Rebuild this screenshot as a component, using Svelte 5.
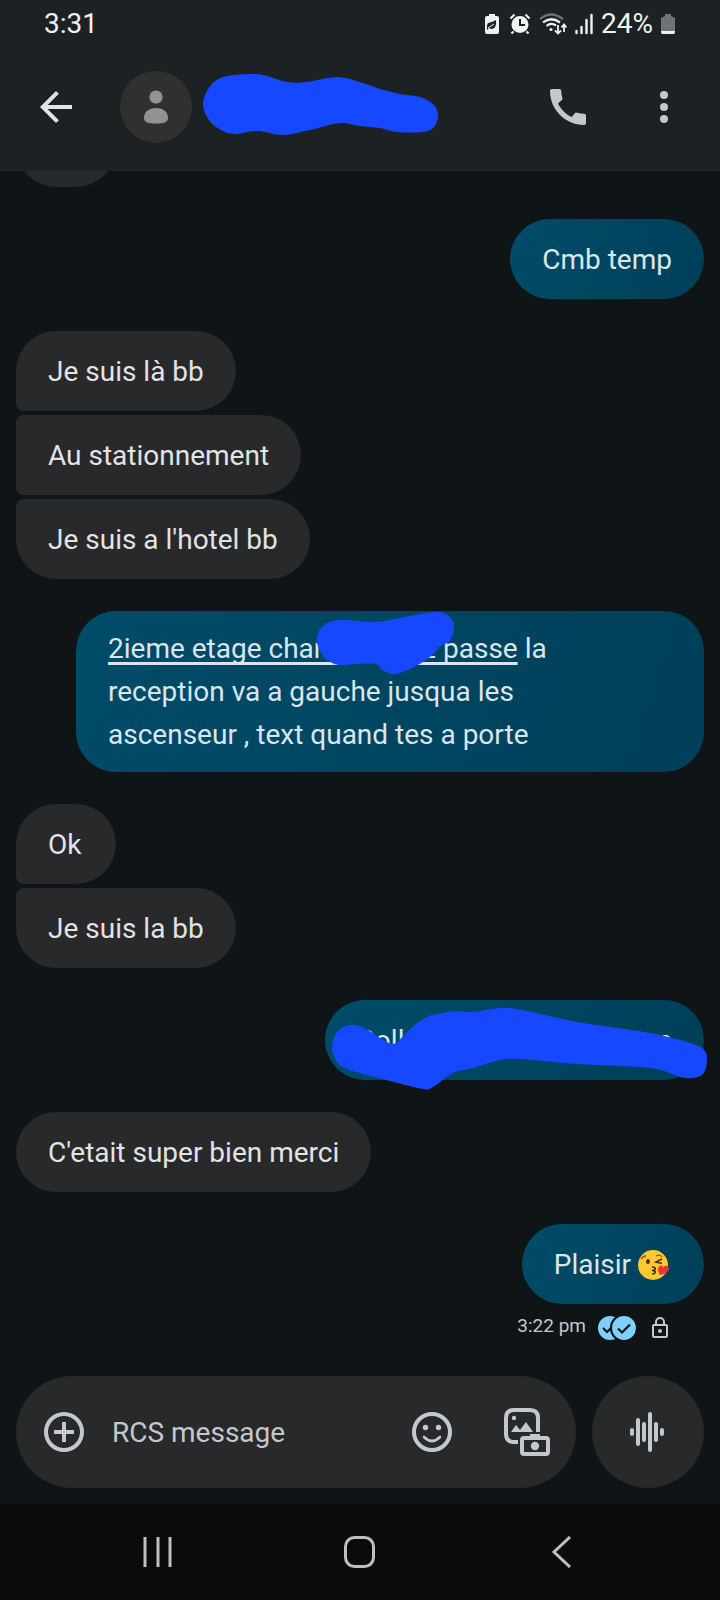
<script lang="ts">
    type Point = [number, number];
    type Part = { text?: string; link?: boolean; gap?: number };
    type Bubble = { parts: Part[]; scribble?: Point[]; emoji?: boolean; wide?: boolean };
    type Group = { from: "them" | "me"; bubbles: Bubble[] };

    const nameScribble: Point[] = [
        [0, 31], [3, 19], [11, 8], [24, 2], [50, 0], [64, 2], [84, 8], [104, 8], [134, 3],
        [157, 8], [177, 15], [197, 20], [217, 23], [231, 31], [235, 42], [231, 53], [220, 58],
        [194, 58], [177, 54], [157, 52], [137, 49], [107, 56], [80, 61], [54, 57],
        [30, 60], [13, 53], [4, 43],
    ];

    const groups: Group[] = [
        // scrolled almost completely under the header
        { from: "them", bubbles: [{ parts: [] }] },
        { from: "me", bubbles: [{ parts: [{ text: "Cmb temp" }] }] },
        {
            from: "them",
            bubbles: [
                { parts: [{ text: "Je suis là bb" }] },
                { parts: [{ text: "Au stationnement" }] },
                { parts: [{ text: "Je suis a l'hotel bb" }] },
            ],
        },
        {
            from: "me",
            bubbles: [
                {
                    wide: true,
                    parts: [
                        { text: "2ieme etage cham", link: true },
                        { gap: 75 },
                        { text: "\u00a02 passe", link: true },
                        { text: " la\n" },
                        { text: "reception va a gauche jusqua les\n" },
                        { text: "ascenseur , text quand tes a porte" },
                    ],
                    scribble: [
                        [241, 32], [243, 20], [253, 11], [270, 9], [300, 11], [333, 5],
                        [361, 1], [374, 6], [378, 17], [374, 30], [365, 35], [354, 46],
                        [338, 56], [319, 63], [306, 59], [300, 53], [280, 53], [262, 54], [248, 46],
                    ],
                },
            ],
        },
        {
            from: "them",
            bubbles: [{ parts: [{ text: "Ok" }] }, { parts: [{ text: "Je suis la bb" }] }],
        },
        {
            from: "me",
            bubbles: [
                {
                    parts: [{ text: "Coll" }, { gap: 243 }, { text: "m" }],
                    scribble: [
                        [7, 47], [10, 35], [18, 27], [30, 25], [43, 30], [62, 42], [71, 43],
                        [82, 32], [98, 19], [113, 14], [132, 11], [148, 12], [177, 8], [202, 11],
                        [258, 23], [325, 33], [368, 44], [380, 51], [382, 62], [378, 74], [368, 78],
                        [355, 77], [325, 68], [252, 64], [195, 59], [175, 60], [148, 68],
                        [128, 73], [108, 87], [98, 89], [65, 81], [22, 69], [11, 60],
                    ],
                },
            ],
        },
        { from: "them", bubbles: [{ parts: [{ text: "C'etait super bien merci" }] }] },
        { from: "me", bubbles: [{ parts: [{ text: "Plaisir " }], emoji: true }] },
    ];

    let draft = $state("");

    // closed Catmull-Rom curve through the points
    function smooth(points: Point[]) {
        const n = points.length;
        let d = `M${points[0][0]} ${points[0][1]}`;
        for (let i = 0; i < n; i++) {
            const a = points[(i + n - 1) % n];
            const b = points[i];
            const c = points[(i + 1) % n];
            const e = points[(i + 2) % n];
            d += `C${b[0] + (c[0] - a[0]) / 6} ${b[1] + (c[1] - a[1]) / 6}`;
            d += ` ${c[0] - (e[0] - b[0]) / 6} ${c[1] - (e[1] - b[1]) / 6} ${c[0]} ${c[1]}`;
        }
        return d + "Z";
    }
</script>

<div class="phone">
    <header>
        <div class="status">
            <span class="clock">3:31</span>
            <svg width="16" height="22" viewBox="0 0 16 22">
                <path d="M4 1h6v2h2q2 0 2 2v14q0 2-2 2H2q-2 0-2-2V5q0-2 2-2h2z" fill="#f0f1f2" />
                <path d="M2 15q-1-6 5-6l4-2q1 9-5 9l-2-1-2 2z" fill="#1c2124" />
                <path d="M3 15l6-4" stroke="#f0f1f2" />
            </svg>
            <svg width="22" height="22" viewBox="0 0 22 22" fill="none" stroke="#f0f1f2">
                <circle cx="11" cy="11.500" r="8.500" fill="#f0f1f2" stroke="none" />
                <path d="M1.500 5.500L5.500 1.500M20.500 5.500L16.500 1.500M4.500 18.500L2.500 20.500M17.500 18.500L19.500 20.500" stroke-width="2.200" />
                <path d="M11 6v6h5" stroke="#1c2124" stroke-width="2" />
            </svg>
            <svg width="28" height="22" viewBox="0 0 28 22" fill="none" stroke-width="2.200">
                <path d="M1 6Q12-3 24 6" stroke="#6d7174" />
                <path d="M4 9.500Q12 3 21 9.500M7.500 13Q12 9 17 12.500" stroke="#f0f1f2" />
                <circle cx="12" cy="16.500" r="1.600" fill="#f0f1f2" />
                <path d="M19 12v8M16 17.500l3 3 3-3M25 19v-7M22.500 14.500l2.500-3 2.500 3" stroke="#f0f1f2" stroke-width="1.800" />
            </svg>
            <svg width="18" height="22" viewBox="0 0 18 22" stroke="#f0f1f2" stroke-width="2.400" stroke-linecap="round">
                <path d="M1.500 18v2M6.500 14V20M11.500 7V20M16.500 2V20" />
            </svg>
            <span>24%</span>
            <svg width="14" height="22" viewBox="0 0 14 22">
                <path d="M4 1h6v2l4 2v14q0 2-2 2H2q-2 0-2-2V5l4-2z" fill="#707275" />
                <path d="M0 18h14v1q0 2-2 2H2q-2 0-2-2z" fill="#f0f1f2" />
            </svg>
        </div>
        <div class="appbar">
            <button class="icon light" aria-label="Back">
                <svg viewBox="0 0 24 24"><path d="M20 11H7.830l5.590-5.590L12 4l-8 8 8 8 1.410-1.410L7.830 13H20z" /></svg>
            </button>
            <div class="avatar">
                <svg width="24" height="34" viewBox="0 0 24 34">
                    <circle cx="12" cy="7" r="6.600" />
                    <path d="M0 28C0 21 6 18 12 18s12 3 12 10c0 4-3 5.500-12 5.500S0 32 0 28z" />
                </svg>
            </div>
            <svg class="name" width="236" height="62" viewBox="0 0 236 62"><path d={smooth(nameScribble)} /></svg>
            <button class="icon" aria-label="Call">
                <svg viewBox="0 0 24 24">
                    <path d="M20.010 15.380c-1.230 0-2.420-.2-3.530-.56-.35-.12-.74-.03-1.010.24l-1.570 1.970c-2.830-1.350-5.480-3.900-6.890-6.830l1.950-1.660c.27-.28.35-.67.24-1.020-.37-1.110-.56-2.300-.56-3.530 0-.54-.45-.99-.99-.99H4.190C3.650 3 3 3.240 3 3.990 3 13.280 10.730 21 20.010 21c.71 0 .99-.63.99-1.180v-3.450c0-.54-.45-.99-.99-.99z" />
                </svg>
            </button>
            <button class="icon" aria-label="More options">
                <svg viewBox="0 0 24 24">
                    <circle cx="12" cy="6" r="2" />
                    <circle cx="12" cy="12" r="2" />
                    <circle cx="12" cy="18" r="2" />
                </svg>
            </button>
        </div>
    </header>

    <main>
        {#each groups as group}
            <div class="group {group.from}">
                {#each group.bubbles as bubble}
                    <div class="bubble" class:wide={bubble.wide}>
                        <p>{#each bubble.parts as part}{#if part.gap}<span class="gap" style="width: {part.gap}px"></span>{:else if part.link}<a href="#place">{part.text}</a>{:else}{part.text}{/if}{/each}{#if bubble.emoji}<svg class="emoji" width="34" height="30" viewBox="0 0 34 30" role="img" aria-label="Kiss">
                                <circle cx="15" cy="15" r="15" fill="#fcc92f" />
                                <path d="M3 9q2-3 5-3M18 6q4-2 6 1" fill="none" stroke="#8a5a12" stroke-width="1.300" />
                                <ellipse cx="10" cy="11.500" rx="2" ry="2.500" fill="#50310f" />
                                <path d="M24 9l-6 3 6 1.500M14 17q4 0 3 2.500-1 1-3 1 4 0 3 2.500-1 1-3 1" fill="none" stroke="#50310f" stroke-width="1.700" />
                                <path d="M22 25c-2-3-3-7 0-9 2-1 3 0 3 2 1-3 5-3 6 0 0 4-5 6-9 7z" fill="#e5343d" />
                            </svg>{/if}</p>
                        {#if bubble.scribble}
                            <svg class="scribble"><path d={smooth(bubble.scribble)} /></svg>
                        {/if}
                    </div>
                {/each}
            </div>
        {/each}
        <div class="receipt">
            <time>3:22 pm</time>
            <svg width="38" height="24" viewBox="0 0 38 24" fill="none" stroke="#101518" stroke-width="2.200">
                <circle cx="12" cy="12" r="12" fill="#7fcfff" stroke="none" />
                <path d="M5 12l4 4 8-8" />
                <circle cx="26" cy="12" r="13" fill="#7fcfff" />
                <path d="M20 12.500l4 4 8-8" />
            </svg>
            <svg width="24" height="24" viewBox="0 0 24 24" fill="none" stroke="#c4c7c9" stroke-width="2">
                <rect x="5" y="9" width="14" height="12" rx="1" />
                <path d="M8 9V6a4 4 0 0 1 8 0v3" />
                <circle cx="12" cy="15" r="2" fill="#c4c7c9" stroke="none" />
            </svg>
        </div>
    </main>

    <div class="composer">
        <div class="field">
            <button class="icon" aria-label="Attach">
                <svg viewBox="0 0 24 24">
                    <path d="M13 7h-2v4H7v2h4v4h2v-4h4v-2h-4zM12 2a10 10 0 1 0 0 20 10 10 0 0 0 0-20zm0 18a8 8 0 1 1 0-16 8 8 0 0 1 0 16z" />
                </svg>
            </button>
            <input type="text" placeholder="RCS message" aria-label="RCS message" bind:value={draft} />
            <button class="icon" aria-label="Emoji">
                <svg viewBox="0 0 48 48">
                    <circle cx="24" cy="24" r="18" fill="none" stroke="currentColor" stroke-width="4" />
                    <circle cx="17.500" cy="19.500" r="2.700" />
                    <circle cx="30.500" cy="19.500" r="2.700" />
                    <path d="M16 29q8 8 16 0" fill="none" stroke="currentColor" stroke-width="2.600" stroke-linecap="round" />
                </svg>
            </button>
            <button class="icon" aria-label="Gallery">
                <svg viewBox="0 0 48 48">
                    <path d="M34 24V10q0-8-8-8H10q-8 0-8 8v16q0 8 8 8h4" fill="none" stroke="currentColor" stroke-width="4" />
                    <circle cx="10" cy="10" r="2.200" />
                    <path d="M7 24l5-7 4 5 6-8 7 10z" />
                    <rect x="18" y="30" width="26" height="16" rx="2" fill="none" stroke="currentColor" stroke-width="4" />
                    <path d="M26 26h10v4H26z" />
                    <circle cx="31" cy="38" r="4.200" />
                </svg>
            </button>
        </div>
        <button class="voice" aria-label="Record voice message">
            <svg width="48" height="48" viewBox="0 0 48 48" stroke="currentColor" stroke-width="4" stroke-linecap="round">
                <path d="M8 22v4M14 12v24M20 16v16M26 6v36M32 16v16M38 22v4" />
            </svg>
        </button>
    </div>

    <nav>
        <button aria-label="Recents">
            <svg width="32" height="32" viewBox="0 0 32 32"><path d="M3 1v30M16 1v30M28 1v30" /></svg>
        </button>
        <button aria-label="Home">
            <svg width="32" height="32" viewBox="0 0 32 32"><rect x="1.500" y="1.500" width="28" height="29" rx="9" /></svg>
        </button>
        <button aria-label="Back">
            <svg width="32" height="32" viewBox="0 0 32 32"><path d="M24 1L8 16l16 15" /></svg>
        </button>
    </nav>
</div>

<style>
    :global(body) {
        margin: 0;
        background: #0f1417;
    }

    .phone {
        display: flex;
        flex-direction: column;
        height: 100vh;
        overflow: hidden;

        font-family: Roboto, "Liberation Sans", sans-serif;
        font-size: 28px;
        color: #e3e3e3;
        background: #0f1417;
    }

    svg {
        display: block;
        flex: none;
    }

    button {
        display: flex;
        justify-content: center;
        align-items: center;
        flex: none;
        padding: 0;
        border: 0;
        background: none;
        color: #c2c8ce;
        cursor: pointer;
    }

    header {
        flex: none;
        background: #1c2124;
    }

    .status {
        display: flex;
        align-items: center;
        gap: 8px;
        height: 43px;
        padding: 4px 45px 0 44px;
        box-sizing: border-box;
        color: #f0f1f2;
    }

    .clock {
        flex: 1;
    }

    .appbar {
        display: flex;
        align-items: center;
        height: 128px;
        padding: 0 32px;
    }

    .icon svg {
        width: 48px;
        height: 48px;
        fill: currentColor;
    }

    .light {
        color: #e1e4e7;
    }

    .appbar .icon + .icon {
        margin-left: 48px;
    }

    .avatar {
        display: flex;
        justify-content: center;
        align-items: center;
        width: 72px;
        height: 72px;
        margin: 0 11px 0 40px;
        border-radius: 50%;
        background: #303030;
        fill: #929393;
    }

    .name {
        margin-right: auto;
        margin-bottom: 4px;
        fill: #1648ff;
    }

    main {
        display: flex;
        flex-direction: column;
        justify-content: flex-end;
        flex: 1;
        min-height: 0;
        overflow: hidden;
        padding: 0 16px 32px;
    }

    .group {
        display: flex;
        flex-direction: column;
        flex: none;
        align-items: flex-start;
        gap: 4px;
        padding-right: 60px;
    }

    .group + .group {
        margin-top: 32px;
    }

    .group.me {
        align-items: flex-end;
        padding: 0 0 0 60px;
    }

    .bubble {
        position: relative;
        display: flex;
        align-items: center;
        min-width: 100px;
        min-height: 80px;
        padding: 16px 32px;
        box-sizing: border-box;
        border-radius: 40px;
        background: #28292b;
    }

    .bubble.wide {
        width: 100%;
    }

    .them .bubble:not(:last-child) {
        border-bottom-left-radius: 8px;
    }

    .them .bubble:not(:first-child) {
        border-top-left-radius: 8px;
    }

    .me .bubble {
        color: #dae6ed;
        background: linear-gradient(110deg, #004c69, #003f58);
    }

    .bubble p {
        margin: 0;
        line-height: 43px;
        white-space: pre-wrap;
    }

    .bubble a {
        color: inherit;
        text-decoration: underline;
        text-decoration-thickness: 3px;
        text-decoration-skip-ink: none;
        text-underline-offset: 4px;
    }

    .gap {
        display: inline-block;
    }

    .emoji {
        display: inline-block;
        vertical-align: -6px;
    }

    .scribble {
        position: absolute;
        top: 0;
        left: 0;
        width: 100%;
        height: 100%;
        overflow: visible;
        fill: #1648ff;
    }

    .receipt {
        display: flex;
        justify-content: flex-end;
        align-items: center;
        flex: none;
        gap: 12px;
        height: 32px;
        margin-top: 8px;
        padding-right: 32px;
    }

    time {
        font-size: 19px;
        line-height: 28px;
        color: #c4c7c9;
        padding-bottom: 4px;
    }

    .composer {
        display: flex;
        flex: none;
        gap: 16px;
        padding: 0 16px 16px;
    }

    .field {
        display: flex;
        align-items: center;
        flex: 1;
        min-width: 0;
        height: 112px;
        padding: 0 24px;
        box-sizing: border-box;
        border-radius: 56px;
        background: #28292b;
    }

    .field .icon + .icon {
        margin-left: 48px;
    }

    input {
        flex: 1;
        min-width: 0;
        margin: 0 24px;
        padding: 0;
        border: 0;
        outline: 0;
        background: none;
        font: inherit;
        color: #e3e3e3;
    }

    input::placeholder {
        color: #c2c8ce;
        opacity: 1;
    }

    .voice {
        width: 112px;
        height: 112px;
        border-radius: 50%;
        background: #28292b;
    }

    nav {
        display: flex;
        flex: none;
        height: 96px;
        padding: 0 8%;
        background: #0a0b0c;
    }

    nav button {
        flex: 1;
    }

    nav svg {
        fill: none;
        stroke: #bfbfbf;
        stroke-width: 3px;
    }
</style>
